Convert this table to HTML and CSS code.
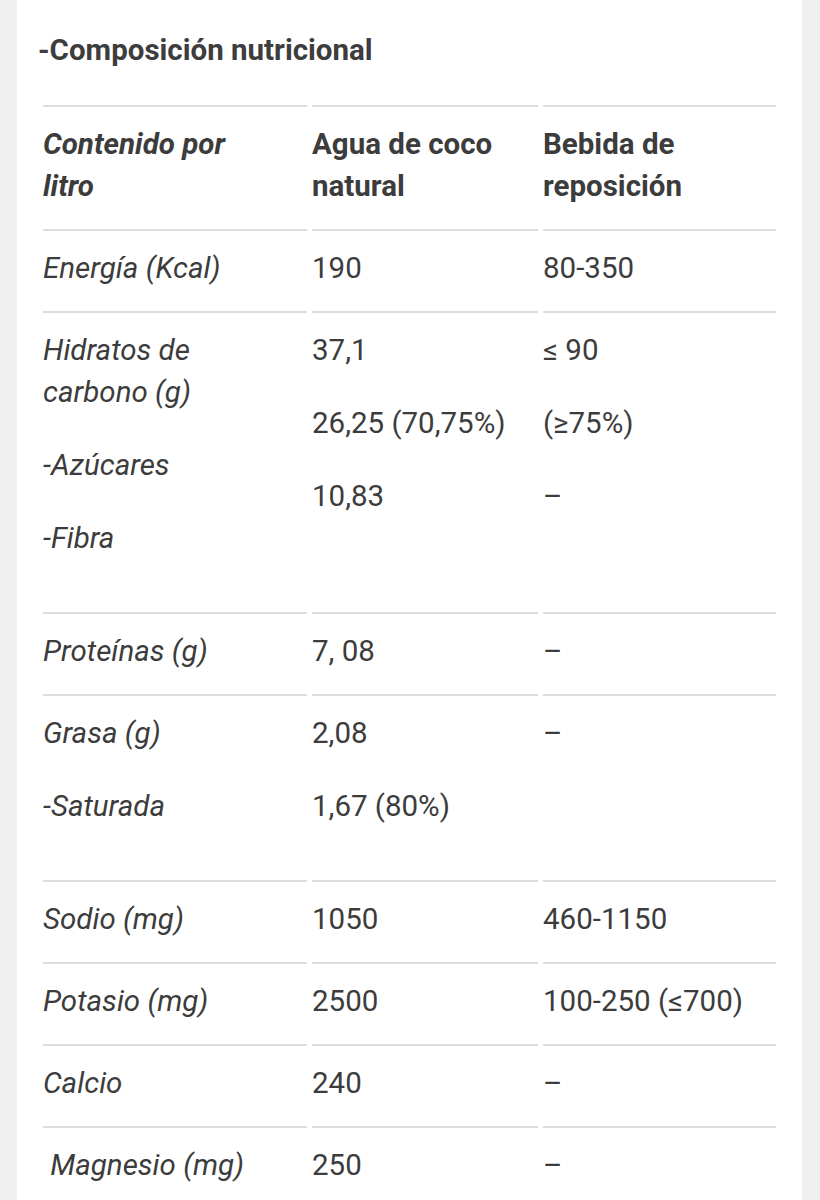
FILE: index.html
```html
<!DOCTYPE html>
<html lang="es">
<head>
<meta charset="utf-8">
<title>Composición nutricional</title>
<link rel="stylesheet" href="styles.css">
</head>
<body>
<div class="page">
  <div class="card">
    <h2 class="title">-Composición nutricional</h2>
    <table class="nutri">
      <colgroup>
        <col class="col-label">
        <col class="col-coco">
        <col class="col-bebida">
      </colgroup>
      <thead>
        <tr>
          <th class="label">Contenido por litro</th>
          <th>Agua de coco natural</th>
          <th>Bebida de reposición</th>
        </tr>
      </thead>
      <tbody>
        <tr>
          <td class="label">Energía (Kcal)</td>
          <td>190</td>
          <td>80-350</td>
        </tr>
        <tr>
          <td class="label">
            <p>Hidratos de carbono (g)</p>
            <p>-Azúcares</p>
            <p>-Fibra</p>
          </td>
          <td>
            <p>37,1</p>
            <p>26,25 (70,75%)</p>
            <p>10,83</p>
          </td>
          <td>
            <p>≤ 90</p>
            <p>(≥75%)</p>
            <p>–</p>
          </td>
        </tr>
        <tr>
          <td class="label">Proteínas (g)</td>
          <td>7, 08</td>
          <td>–</td>
        </tr>
        <tr>
          <td class="label">
            <p>Grasa (g)</p>
            <p>-Saturada</p>
          </td>
          <td>
            <p>2,08</p>
            <p>1,67 (80%)</p>
          </td>
          <td>–</td>
        </tr>
        <tr>
          <td class="label">Sodio (mg)</td>
          <td>1050</td>
          <td>460-1150</td>
        </tr>
        <tr>
          <td class="label">Potasio (mg)</td>
          <td>2500</td>
          <td>100-250 (≤700)</td>
        </tr>
        <tr>
          <td class="label">Calcio</td>
          <td>240</td>
          <td>–</td>
        </tr>
        <tr>
          <td class="label">&nbsp;Magnesio (mg)</td>
          <td>250</td>
          <td>–</td>
        </tr>
      </tbody>
    </table>
  </div>
</div>
</body>
</html>
```

FILE: styles.css
```css
html, body {
  margin: 0;
  padding: 0;
  background: #efefef;
}

body {
  font-family: Roboto, "Liberation Sans", Arial, sans-serif;
  color: #3c3c3c;
}

.page {
  width: 820px;
  height: 1200px;
  overflow: hidden;
  background: #efefef;
}

.card {
  margin-left: 17px;
  width: 785px;
  box-sizing: border-box;
  padding: 30px 21px 40px;
  background: #ffffff;
  min-height: 1200px;
}

.title {
  margin: 0;
  font-size: 29.5px;
  line-height: 40px;
  font-weight: 700;
  color: #3d3d3d;
}

.nutri {
  margin-top: 35px;
  width: 743px;
  table-layout: fixed;
  border-collapse: separate;
  border-spacing: 5px 0;
  font-size: 29.5px;
  line-height: 42px;
}

.col-label { width: 264px; }
.col-coco { width: 226px; }
.col-bebida { width: 233px; }

.nutri th,
.nutri td {
  text-align: left;
  vertical-align: top;
  padding: 16px 28px 22px 0;
  border-top: 2px solid #dcdcdc;
}

.nutri th {
  font-weight: 700;
}

.nutri .label {
  font-style: italic;
}

.nutri p {
  margin: 0 0 31px;
}
```
